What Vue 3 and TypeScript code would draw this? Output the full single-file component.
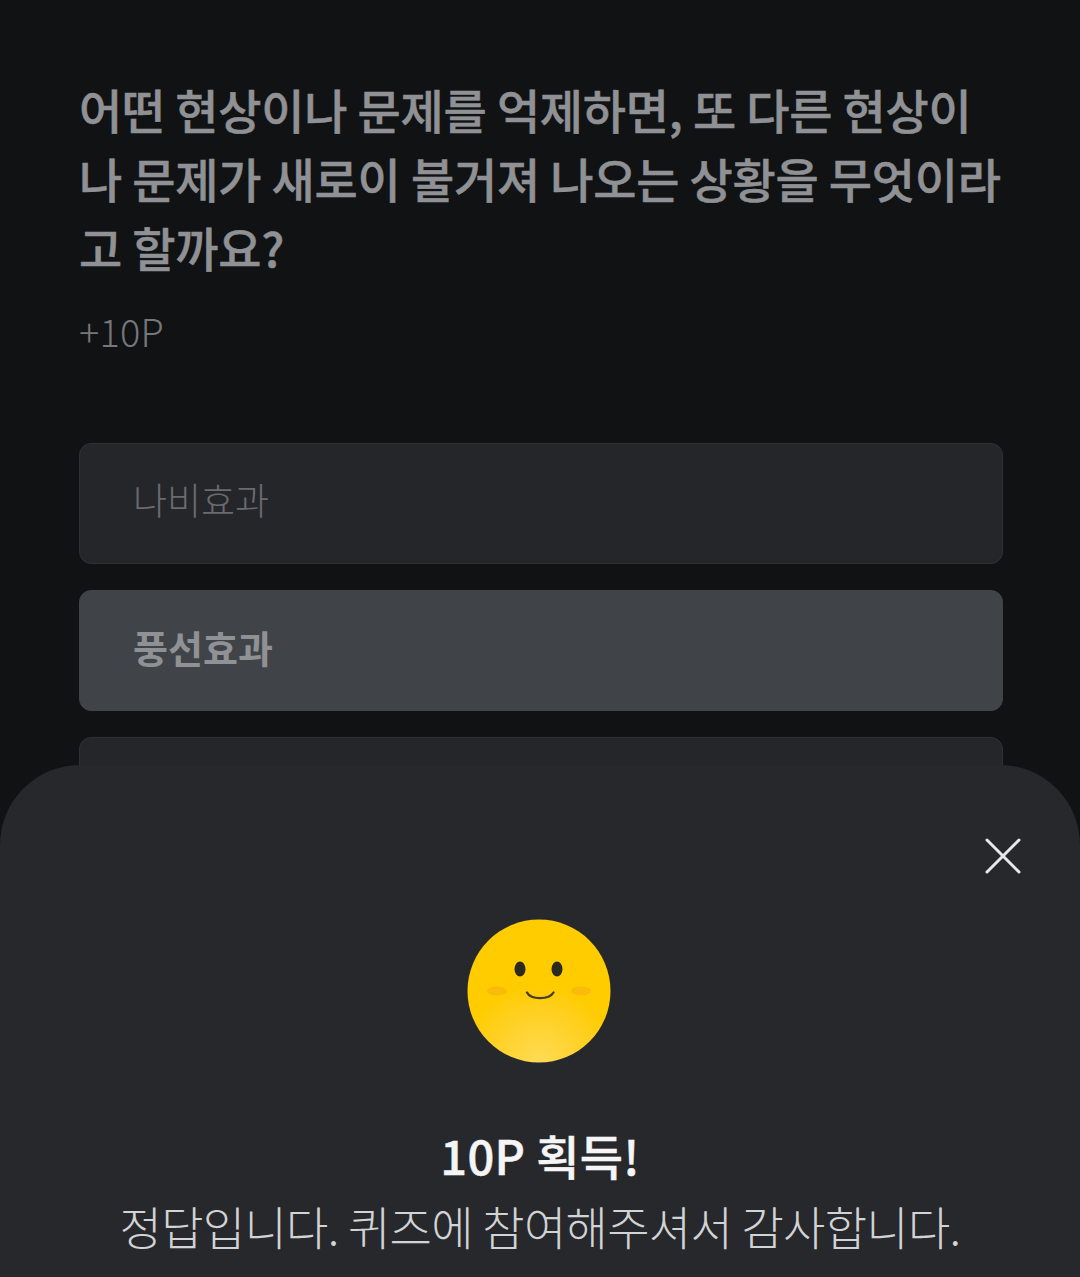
<template>
  <div class="screen">
    <main class="quiz">
      <h1 class="question">어떤 현상이나 문제를 억제하면, 또 다른 현상이<br />나 문제가 새로이 불거져 나오는 상황을 무엇이라<br />고 할까요?</h1>
      <p class="point">+10P</p>
      <ul class="options">
        <li
          v-for="(option, i) in options"
          :key="i"
          class="option"
          :class="{ selected: option.selected }"
        >
          {{ option.label }}
        </li>
      </ul>
    </main>

    <section class="sheet">
      <button class="close" type="button" aria-label="닫기">
        <svg width="36" height="36" viewBox="0 0 36 36" fill="none">
          <path d="M2 2L34 34M34 2L2 34" stroke="#e8e8ea" stroke-width="3" stroke-linecap="round" />
        </svg>
      </button>
      <svg class="smile" width="146" height="146" viewBox="0 0 146 146">
        <defs>
          <radialGradient id="face" cx="73" cy="146" r="92" gradientUnits="userSpaceOnUse">
            <stop offset="0" stop-color="#ffdb57" />
            <stop offset="0.62" stop-color="#ffcf1c" />
            <stop offset="0.85" stop-color="#ffcc00" />
          </radialGradient>
        </defs>
        <circle cx="73" cy="73" r="71.5" fill="url(#face)" />
        <ellipse cx="54" cy="51" ry="7.5" rx="5.5" fill="#2b2a1f" />
        <ellipse cx="91" cy="51" ry="7.5" rx="5.5" fill="#2b2a1f" />
        <ellipse cx="31" cy="73" rx="10" ry="4.5" fill="#fbbb0a" />
        <ellipse cx="115" cy="73" rx="10" ry="4.5" fill="#fbbb0a" />
        <path d="M61 74.5C65 82 83 82 87.5 74.5" fill="none" stroke="#4a3e14" stroke-width="2.4" stroke-linecap="round" />
      </svg>
      <h2 class="reward">10P 획득!</h2>
      <p class="message">정답입니다. 퀴즈에 참여해주셔서 감사합니다.</p>
    </section>
  </div>
</template>

<script setup lang="ts">
interface Option {
  label: string
  selected?: boolean
}

const options: Option[] = [
  { label: '나비효과' },
  { label: '풍선효과', selected: true },
  { label: '' }
]
</script>

<style>
html,
body {
  margin: 0;
  background: #111214;
}
</style>

<style scoped>
.screen {
  position: relative;
  width: 1080px;
  height: 1277px;
  overflow: hidden;
  background: #111214;
  font-family: "Noto Sans CJK KR", "Noto Sans", sans-serif;
}
.quiz {
  padding: 74px 77px 0 79px;
}
.question {
  margin: 0;
  font-size: 47px;
  line-height: 69px;
  font-weight: 500;
  letter-spacing: -0.25px;
  -webkit-text-stroke: 0.5px #8f9194;
  white-space: nowrap;
  color: #8f9194;
}
.point {
  margin: 23px 0 0;
  font-size: 38px;
  line-height: 54px;
  font-weight: 300;
  letter-spacing: 0.2px;
  color: #75777a;
}
.options {
  list-style: none;
  margin: 85px 0 0;
  padding: 0;
  display: flex;
  flex-direction: column;
  gap: 26px;
}
.option {
  box-sizing: border-box;
  height: 121px;
  padding: 0 53px 9px;
  display: flex;
  align-items: center;
  border: 1px solid #2e3034;
  border-radius: 12px;
  background: #25262a;
  font-size: 37px;
  font-weight: 300;
  color: #696b6f;
}
.option.selected {
  border-color: #404347;
  background: #404347;
  padding-bottom: 8px;
  font-size: 38px;
  font-weight: 700;
  color: #8f9194;
}
.sheet {
  position: absolute;
  left: 0;
  right: 0;
  top: 765px;
  height: 512px;
  display: flex;
  flex-direction: column;
  align-items: center;
  border-radius: 80px 80px 0 0;
  background: #27282c;
}
.close {
  position: absolute;
  top: 73px;
  left: 985px;
  padding: 0;
  border: 0;
  background: none;
  line-height: 0;
}
.smile {
  margin-top: 153px;
  margin-left: -2px;
}
.reward {
  margin: 56px 0 0;
  font-size: 47px;
  line-height: 70px;
  font-weight: 500;
  letter-spacing: 0.3px;
  -webkit-text-stroke: 0.5px #f5f5f6;
  color: #f5f5f6;
}
.message {
  margin: 0;
  font-size: 46px;
  line-height: 70px;
  font-weight: 300;
  letter-spacing: -0.7px;
  color: #d2d3d5;
  white-space: nowrap;
}
</style>
